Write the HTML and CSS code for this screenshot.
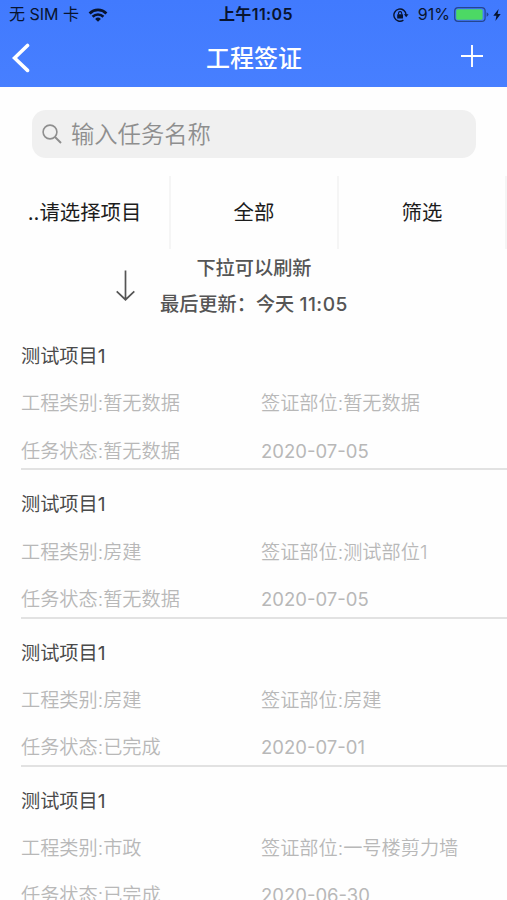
FILE: index.html
```html
<!DOCTYPE html>
<html lang="zh-CN">
  <head>
    <meta charset="UTF-8" />
    <meta name="viewport" content="width=device-width, initial-scale=1.0" />
    <title>工程签证</title>
    <link rel="stylesheet" href="styles.css">
  </head>
  <body>

    <header class="header">
      <div class="status-bar">
        <div class="carrier">
          <span class="carrier-name">无 SIM 卡</span>
          <svg class="wifi" viewBox="0 0 20 14" width="20" height="14">
            <path d="M1.6 5.4a12 12 0 0 1 16.8 0" fill="none" stroke="#08142f" stroke-width="2.8" />
            <path d="M4.6 8.7a7.7 7.7 0 0 1 10.8 0" fill="none" stroke="#08142f" stroke-width="2.6" />
            <path d="M10 13.8l-2.9-2.8a4.2 4.2 0 0 1 5.8 0z" fill="#08142f" />
          </svg>
        </div>
        <div class="time">上午11:05</div>
        <div class="power">
          <svg class="lock" viewBox="0 0 16 14" width="16" height="14">
            <path d="M10.4 12.2A6.1 6.1 0 1 1 13.1 7" fill="none" stroke="#08142f" stroke-width="1.4" />
            <path d="M10.9 6.2h4.6l-2.3 3.1z" fill="#08142f" />
            <rect x="4.2" y="6.2" width="5.8" height="4.2" rx="0.5" fill="#08142f" />
            <path d="M5.5 6.6V5.2a1.6 1.6 0 0 1 3.2 0v1.4" fill="none" stroke="#08142f" stroke-width="1.1" />
          </svg>
          <span class="percent">91%</span>
          <svg class="battery" viewBox="0 0 36 15" width="36" height="15">
            <rect x="0.7" y="0.7" width="30.4" height="13.6" rx="3.4" fill="none" stroke="#254690" stroke-width="1.2" />
            <rect x="2.2" y="2.2" width="26.4" height="10.6" rx="1.5" fill="#4cd964" />
            <path d="M32.6 5.2q1.9 0.8 1.9 2.3t-1.9 2.3z" fill="#254690" />
          </svg>
          <svg class="bolt" viewBox="0 0 8 12" width="8" height="12">
            <path d="M5.6 0L0.3 6.8h3.1L2.4 12l5.3-7H4.6z" fill="#08142f" />
          </svg>
        </div>
      </div>

      <div class="nav">
        <svg class="back" viewBox="0 0 18 30" width="18" height="30">
          <path d="M15.5 2.5L2.5 15l13 12.4" fill="none" stroke="#fff" stroke-width="3.6" stroke-linecap="round" />
        </svg>
        <h1>工程签证</h1>
        <svg class="add" viewBox="0 0 24 24" width="24" height="24">
          <path d="M12 1v22M1 12h22" fill="none" stroke="#fff" stroke-width="1.9" />
        </svg>
      </div>
    </header>

    <div class="search">
      <svg viewBox="0 0 20 20" width="20" height="20">
        <circle cx="8" cy="8" r="6.9" fill="none" stroke="#8e8e8e" stroke-width="1.6" />
        <path d="M13 13l6 6" fill="none" stroke="#8e8e8e" stroke-width="2" />
      </svg>
      <span>输入任务名称</span>
    </div>

    <div class="filters">
      <div class="filter">..请选择项目</div>
      <div class="filter">全部</div>
      <div class="filter">筛选</div>
    </div>

    <div class="refresh">
      <svg viewBox="0 0 20 32" width="20" height="32">
        <path d="M10.5 0.5v29M1.7 21.3l8.8 8.4 8.8-8.4" fill="none" stroke="#555" stroke-width="1.7" />
      </svg>
      <div class="refresh-text">
        <p>下拉可以刷新</p>
        <p>最后更新：今天 <span class="refresh-time">11:05</span></p>
      </div>
    </div>

    <div class="list">
      <div class="item">
        <h2>测试项目1</h2>
        <div class="row"><p>工程类别:暂无数据</p><p>签证部位:暂无数据</p></div>
        <div class="row"><p>任务状态:暂无数据</p><p class="date">2020-07-05</p></div>
      </div>
      <div class="item">
        <h2>测试项目1</h2>
        <div class="row"><p>工程类别:房建</p><p>签证部位:测试部位1</p></div>
        <div class="row"><p>任务状态:暂无数据</p><p class="date">2020-07-05</p></div>
      </div>
      <div class="item">
        <h2>测试项目1</h2>
        <div class="row"><p>工程类别:房建</p><p>签证部位:房建</p></div>
        <div class="row"><p>任务状态:已完成</p><p class="date">2020-07-01</p></div>
      </div>
      <div class="item">
        <h2>测试项目1</h2>
        <div class="row"><p>工程类别:市政</p><p>签证部位:一号楼剪力墙</p></div>
        <div class="row"><p>任务状态:已完成</p><p class="date">2020-06-30</p></div>
      </div>
    </div>

  </body>
</html>
```

FILE: styles.css
```css
*{
  margin: 0;
  padding: 0;
  box-sizing: border-box;
}

body{
  height: 100vh;
  overflow: hidden;
  background-color: #fefefe;
  font-family: Inter, "Noto Sans CJK SC", sans-serif;
}

svg{
  display: block;
  flex-shrink: 0;
}

.header{
  height: 87px;
  background: linear-gradient(#417afe, #477fff);
}

/* status bar */
.status-bar{
  display: grid;
  grid-template-columns: 1fr auto 1fr;
  align-items: center;
  height: 29px;
  padding: 0 6px 0 9px;
  color: #08142f;
  font-size: 16px;
  line-height: 29px;
}

.carrier, .power{
  display: flex;
  align-items: center;
}

.carrier{
  gap: 9px;
}

.power{
  justify-content: flex-end;
}

.time{
  padding-left: 2px;
  font-weight: 600;
  letter-spacing: 0.4px;
}

.percent{
  margin: 0 4px 0 9px;
}

.bolt{
  margin-left: 3px;
}

/* title bar */
.nav{
  display: grid;
  grid-template-columns: 1fr auto 1fr;
  align-items: center;
  height: 57px;
  padding: 0 23px 0 12px;
}

.nav h1{
  padding: 0 0 3px 12px;
  color: white;
  font-size: 24px;
  font-weight: 500;
}

.add{
  justify-self: end;
  margin-bottom: 3px;
}

.search{
  display: flex;
  align-items: center;
  gap: 9px;
  height: 48px;
  margin: 23px 31px 0 32px;
  padding-left: 10px;
  border-radius: 14px;
  background-color: #f0f0f0;
  color: #8e8e8e;
  font-size: 23.3px;
  font-weight: 350;
}

.search span{
  padding-bottom: 3px;
}

.filters{
  display: grid;
  grid-template-columns: 171px 168px 168px;
  height: 73px;
  margin-top: 18px;
}

.filter{
  border-right: 2px solid #f5f5f5;
  color: #1c1c1c;
  font-size: 20.4px;
  line-height: 73px;
  text-align: center;
}

/* pull to refresh */
.refresh{
  display: flex;
  gap: 25px;
  height: 73px;
  padding-left: 115px;
}

.refresh svg{
  margin-top: 21px;
}

.refresh-text{
  padding-top: 1px;
  color: #555;
  font-size: 19.2px;
  font-weight: 500;
  line-height: 36px;
  text-align: center;
}

.refresh-time{
  letter-spacing: 0.5px;
}

.list{
  padding-left: 21px;
}

.item{
  height: 148.3px;
  padding-top: 11px;
  border-bottom: 2px solid #e2e2e2;
}

.item h2, .item p{
  font-size: 19.2px;
  line-height: 47.3px;
}

.item h2{
  color: #4a4a4a;
  font-weight: 400;
}

.item p{
  color: #b8b8b8;
  font-weight: 350;
}

.item .date{
  font-size: 18.5px;
  font-weight: 400;
  line-height: 46px;
}

.row{
  display: grid;
  grid-template-columns: 240px 1fr;
}
```
